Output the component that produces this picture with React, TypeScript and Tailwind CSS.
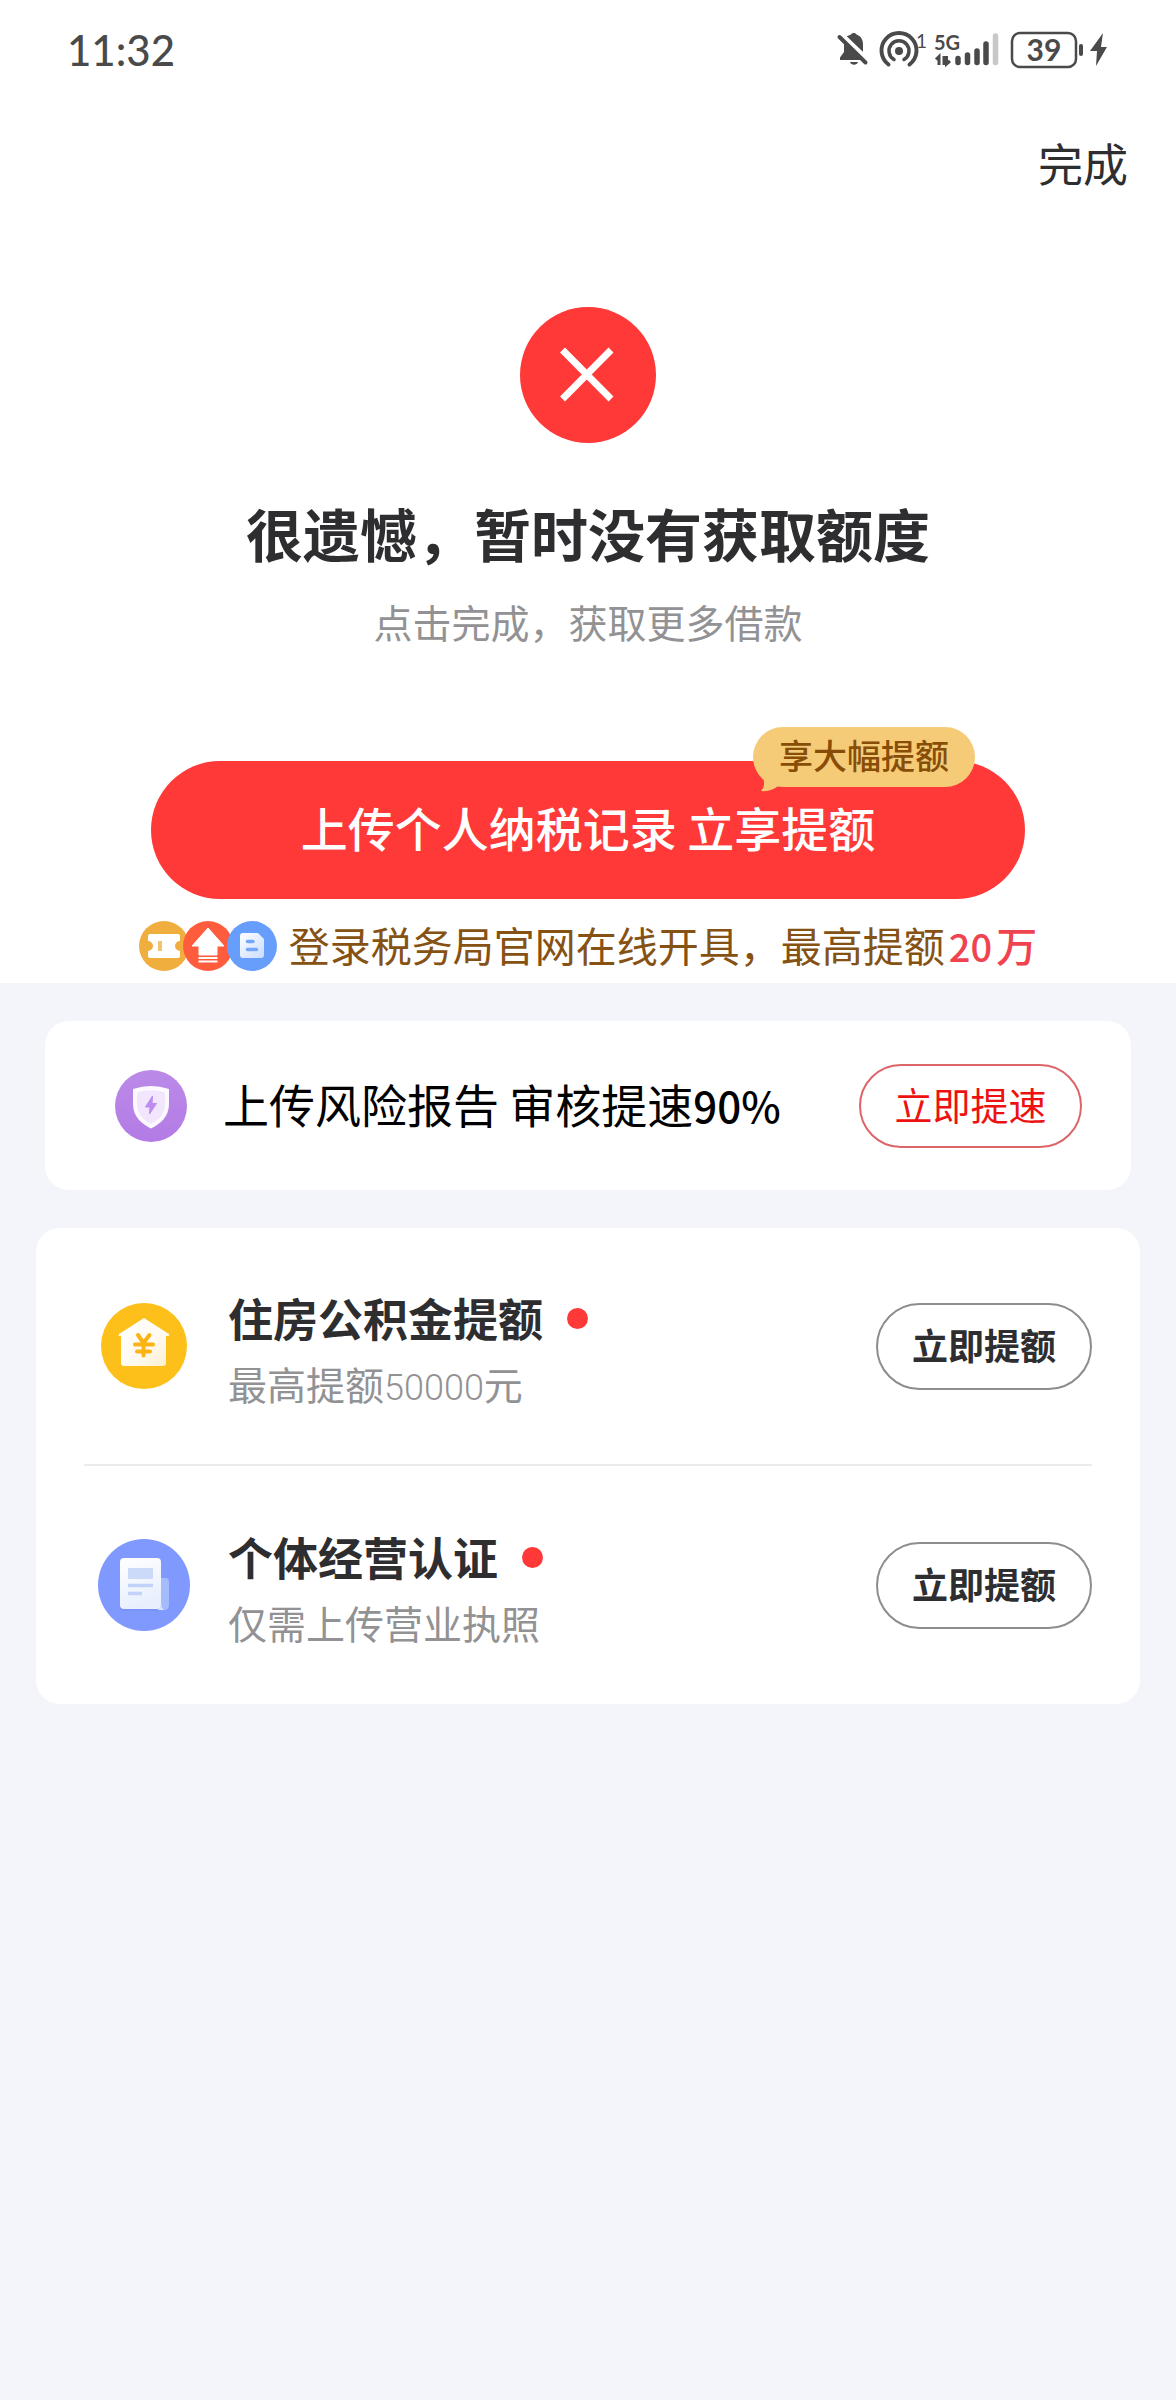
import React from "react";

const CJK = "font-['Noto_Sans_CJK_SC',sans-serif]";

function StatusIcons() {
  return (
    <svg className="overflow-visible" width="276" height="40" viewBox="0 0 276 40" fill="none" aria-hidden="true">
      {/* muted bell */}
      <g fill="#4a4a4a">
        <path d="M9 7 C11 5.500 12.500 5 14 4.500 C15 2.500 18.500 2.500 19.500 4.500 C24 6 26 10 26 14 V22.500 Z" />
        <path d="M13 32 H21 C20 35.500 14 35.500 13 32Z" />
      </g>
      <path d="M4 7 L30 32" stroke="#fff" strokeWidth="9" />
      <path d="M7 12 V22 L3 27.500 V30 H26 Z" fill="#4a4a4a" />
      <path d="M2.500 7 L28.500 32.500" stroke="#4a4a4a" strokeWidth="4" strokeLinecap="round" />
      {/* hotspot */}
      <circle cx="62" cy="21" r="4" fill="#4a4a4a" />
      <path d="M57 29.500 A10 10 0 1 1 67 29.500" stroke="#4a4a4a" strokeWidth="3.500" strokeLinecap="round" />
      <path d="M51.500 34.500 A17.500 17.500 0 1 1 72.500 34.500" stroke="#4a4a4a" strokeWidth="4" strokeLinecap="round" />
      {/* data arrows */}
      <path d="M102 35 V26.500 L99 29.500 M107 35 V26 M109.500 26 V34 L113 31" stroke="#4a4a4a" strokeWidth="3" />
      {/* signal */}
      <g strokeWidth="5.500" strokeLinecap="round" stroke="#4a4a4a">
        <path d="M121 28.500 V32.500" />
        <path d="M130.500 25 V32.500" />
        <path d="M140 21 V32.500" />
        <path d="M149 14 V32.500" />
        <path d="M158.500 6 V32.500" stroke="#c8c8c8" />
      </g>
      {/* battery */}
      <rect x="175" y="3" width="64" height="34" rx="8" stroke="#4a4a4a" strokeWidth="2.500" />
      <path d="M244 16 V24" stroke="#4a4a4a" strokeWidth="4" strokeLinecap="round" />
      <path d="M266 3 L253 21 H260 L259 36 L270 17 H264 Z" fill="#4a4a4a" />
      <text x="79" y="18" fontSize="19" fontFamily="Lato, sans-serif" fill="#4a4a4a">1</text>
      <text x="97" y="20" fontSize="20" fontWeight="700" fontFamily="Lato, sans-serif" fill="#4a4a4a">5G</text>
      <text x="207" y="31" fontSize="30" fontWeight="700" fontFamily="Lato, sans-serif" fill="#4a4a4a" textAnchor="middle">39</text>
    </svg>
  );
}

function TicketIcon() {
  return (
    <svg width="50" height="50" viewBox="0 0 50 50" aria-hidden="true">
      <circle cx="25" cy="25" r="25" fill="#f0ae3e" />
      <path d="M11 13 H39 Q41 13 41 15 V20 A5 5 0 0 0 41 30 V35 Q41 37 39 37 H11 Q9 37 9 35 V30 A5 5 0 0 0 9 20 V15 Q9 13 11 13Z" fill="#fff" />
      <path d="M21 20 V30" stroke="#f3c46d" strokeWidth="4" />
    </svg>
  );
}

function RaiseIcon() {
  return (
    <svg className="-ml-1.5" width="50" height="50" viewBox="0 0 50 50" aria-hidden="true">
      <circle cx="25" cy="25" r="25" fill="#ff5c3e" />
      <path d="M25 7 L41 25 H34 V34 H16 V25 H9 Z" fill="#fff" stroke="#fff" strokeLinejoin="round" />
      <path d="M15.500 37 H34.500" stroke="#fff" strokeWidth="2" />
      <path d="M15.500 40.500 H34.500" stroke="#fff" strokeWidth="2" />
    </svg>
  );
}

function FormIcon() {
  return (
    <svg className="-ml-1.5" width="50" height="50" viewBox="0 0 50 50" aria-hidden="true">
      <defs>
        <linearGradient id="form" x1="0" y1="0" x2="1" y2="1">
          <stop stopColor="#fff" />
          <stop offset="1" stopColor="#c9dcff" />
        </linearGradient>
      </defs>
      <circle cx="25" cy="25" r="25" fill="#679efc" />
      <path d="M16 12 H31 L37 18 V34 Q37 37 34 37 H16 Q13 37 13 34 V15 Q13 12 16 12Z" fill="url(#form)" />
      <path d="M20.500 20.500 H26 M20.500 28.500 H29.500" stroke="#74a6fc" strokeWidth="3.500" strokeLinecap="round" />
    </svg>
  );
}

function ShieldIcon() {
  return (
    <svg className="shrink-0" width="72" height="72" viewBox="0 0 72 72" aria-hidden="true">
      <defs>
        <linearGradient id="purple" x1="0" y1="0" x2="0" y2="1">
          <stop stopColor="#bb8ae8" />
          <stop offset="1" stopColor="#b37be6" />
        </linearGradient>
      </defs>
      <circle cx="36" cy="36" r="36" fill="url(#purple)" />
      <path d="M18 19 Q36 13 54 19 V34 C54 47 45 54 36 58.500 C27 54 18 47 18 34 Z" fill="#fdfaff" />
      <path d="M22 22.500 Q36 18 50 22.500 V34 C50 44 44 50 36 54 C28 50 22 44 22 34 Z" fill="#f1e6fd" />
      <path d="M37.500 26 L30.500 37 H35 L34.500 44 L41.500 33.500 H37 Z" fill="#bd8cf0" stroke="#bd8cf0" strokeLinejoin="round" />
    </svg>
  );
}

function HouseIcon() {
  return (
    <svg width="86" height="86" viewBox="0 0 86 86" aria-hidden="true">
      <defs>
        <linearGradient id="house" x1="0" y1="0" x2="1" y2="1">
          <stop stopColor="#fff" />
          <stop offset="0.600" stopColor="#fffaf0" />
          <stop offset="1" stopColor="#fdeecb" />
        </linearGradient>
      </defs>
      <circle cx="43" cy="43" r="43" fill="#fdbf1a" />
      <path d="M43 15 L68 31 Q69 33 66 33 H65 V60 Q65 63 62 63 H23 Q20 63 20 60 V33 H19 Q17 33 18 31 Z" fill="url(#house)" />
      <path d="M37 32 L42.500 40 L48.500 32 M34 41.500 H52 M36 48.500 H49 M42.500 41 V52.500" stroke="#fbb414" strokeWidth="4" strokeLinecap="round" fill="none" />
    </svg>
  );
}

function DocumentIcon() {
  return (
    <svg width="92" height="92" viewBox="0 0 92 92" aria-hidden="true">
      <defs>
        <linearGradient id="doc" x1="0" y1="0" x2="0.300" y2="1">
          <stop stopColor="#fff" />
          <stop offset="1" stopColor="#e8effd" />
        </linearGradient>
      </defs>
      <circle cx="46" cy="46" r="46" fill="#8099ff" />
      <path d="M62 39 H67 Q71 39 71 43 V66 Q71 71 66 71 H60 Z" fill="#a5bcfc" />
      <rect x="22" y="19" width="41" height="53" rx="4" fill="#7086ec" opacity="0.400" />
      <rect x="22" y="19" width="41" height="51" rx="4" fill="url(#doc)" />
      <path d="M59 70 Q63 70 63 66 V63 Q63 71 67 71 H61 Z" fill="#dbe6fd" />
      <rect x="30" y="29" width="25" height="11" fill="#ccdafa" />
      <path d="M30 46.500 H55 M30 54.500 H44" stroke="#c3d2f8" strokeWidth="3.500" />
    </svg>
  );
}

const offers = [
  {
    icon: <HouseIcon />,
    title: "住房公积金提额",
    note: (
      <>
        最高提额<span className="font-[Roboto,sans-serif] text-[36px] font-light leading-none">50000</span>元
      </>
    ),
  },
  { icon: <DocumentIcon />, title: "个体经营认证", note: <>仅需上传营业执照</> },
];

export default function App() {
  return (
    <div className={`min-h-screen bg-[#f4f5fa] text-[#2e2e31] ${CJK}`}>
      <section className="bg-white pb-3">
        <header>
          <div className="flex h-[100px] items-center justify-between pl-[67px] pr-[63px]">
            <time className="font-[Lato,sans-serif] text-[42px] font-medium text-[#4a4a4a]">11:32</time>
            <StatusIcons />
          </div>
          <div className="flex h-[126px] items-center justify-end px-12">
            <button type="button" className="text-[45px] leading-[66px]">完成</button>
          </div>
        </header>

        <div className="mt-[81px] flex flex-col items-center">
          <svg width="136" height="136" viewBox="0 0 136 136" aria-hidden="true">
            <circle cx="68" cy="68" r="68" fill="#ff3838" />
            <path d="M42.500 43 L91 92 M91 43 L42.500 92" stroke="#fff" strokeWidth="7" />
          </svg>
          <h1 className="mt-[47px] text-[57px] font-bold leading-[84px]">很遗憾，暂时没有获取额度</h1>
          <p className="mt-[17px] text-[39px] leading-[60px] text-[#929294]">点击完成，获取更多借款</p>
        </div>

        <div className="relative mx-[151px] mt-[110px]">
          <button type="button" className="flex h-[138px] w-full items-center justify-center whitespace-pre rounded-full bg-[#ff3838] pb-1.5 text-[47px] font-medium text-white">
            上传个人纳税记录 立享提额
          </button>
          <div className="absolute -top-[34px] right-[50px] flex h-[60px] items-center rounded-full bg-[#f5cb78] px-[26px] pb-1.5 text-[34px] font-medium text-[#884e08]">
            享大幅提额
            <svg className="absolute left-2 top-[50px]" width="20" height="15" viewBox="0 0 20 15" aria-hidden="true">
              <path d="M2 0 Q5 9 0 14 Q11 15 18 8 Z" fill="#f5cb78" />
            </svg>
          </div>
        </div>

        <div className="mt-[22px] flex items-center justify-center text-[#865213]">
          <span className="flex shrink-0">
            <TicketIcon />
            <RaiseIcon />
            <FormIcon />
          </span>
          <p className="ml-3 whitespace-nowrap pb-1 text-[41px] leading-[46px]">
            登录税务局官网在线开具，最高提额
            <strong className="ml-1 font-medium text-[#f04350]">
              <span className="mr-1 text-[38px] leading-none">20</span>万
            </strong>
          </p>
        </div>
      </section>

      <section className="mx-[45px] mt-[38px] flex h-[169px] items-center rounded-3xl bg-white pl-[70px] pr-[49px] text-black">
        <ShieldIcon />
        <h2 className="ml-9 flex-1 whitespace-nowrap pb-1 text-[46px]">
          上传风险报告 审核提速<span className="text-[42px] font-medium leading-none">90%</span>
        </h2>
        <button type="button" className="h-[84px] w-[223px] rounded-full border-2 border-[#dc6569] pb-1 text-[38px] text-[#ee1111]">
          立即提速
        </button>
      </section>

      <ul className="mx-9 mt-[38px] rounded-3xl bg-white px-12">
        {offers.map((offer) => (
          <li key={offer.title} className="flex h-[238px] items-center border-b-2 border-[#ebebee] last:border-b-0">
            <span className="flex w-[120px] shrink-0 justify-center">{offer.icon}</span>
            <div className="ml-6 flex-1 pt-2">
              <h2 className="flex items-center text-[45px] font-bold leading-[66px]">
                {offer.title}
                <span className="ml-6 size-[21px] rounded-full bg-[#ff3838]" />
              </h2>
              <p className="text-[39px] leading-[64px] text-[#929294]">{offer.note}</p>
            </div>
            <button type="button" className="h-[87px] w-[216px] rounded-full border-2 border-[#8d8d8f] pb-1 text-[36px] font-bold">
              立即提额
            </button>
          </li>
        ))}
      </ul>
    </div>
  );
}
